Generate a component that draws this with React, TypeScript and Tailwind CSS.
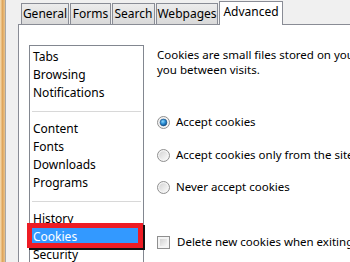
import React from 'react';

const font = { fontFamily: '"Noto Sans", "Liberation Sans", sans-serif' };

const tabs = [
  { label: 'General', w: 'w-[48px]' },
  { label: 'Forms', w: 'w-[41px]' },
  { label: 'Search', w: 'w-[43px]' },
  { label: 'Webpages', w: 'w-[62px]' },
];

const groups = [
  ['Tabs', 'Browsing', 'Notifications'],
  ['Content', 'Fonts', 'Downloads', 'Programs'],
  ['History', 'Cookies', 'Security'],
];

const Radio = ({ checked = false }: { checked?: boolean }) => (
  <svg width="13" height="13" viewBox="0 0 13 13" className="shrink-0">
    <defs>
      <linearGradient id="rb" x1="0" y1="0" x2="1" y2="1">
        <stop offset="0" stopColor="#d4d4d4" />
        <stop offset="1" stopColor="#fafafa" />
      </linearGradient>
      <radialGradient id="rdot" cx="0.4" cy="0.35" r="0.7">
        <stop offset="0" stopColor="#8fd6fb" />
        <stop offset="0.5" stopColor="#2b8fd6" />
        <stop offset="1" stopColor="#0d4a82" />
      </radialGradient>
    </defs>
    <circle cx="6.5" cy="6.5" r="6" fill="#f4f4f4" stroke="#8f8f8f" />
    <circle cx="6.5" cy="6.5" r="4.3" fill="url(#rb)" />
    {checked && <circle cx="6.5" cy="6.5" r="3.4" fill="url(#rdot)" stroke="#174f86" strokeWidth="0.6" />}
  </svg>
);

const Checkbox = () => (
  <div className="w-[13px] h-[13px] shrink-0 border border-[#8f8f8f] bg-[#f4f4f4] p-[2px]">
    <div className="w-full h-full bg-gradient-to-br from-[#d2d2d2] to-[#f7f7f7]" />
  </div>
);

export default function App() {
  return (
    <div className="w-[350px] h-[262px] overflow-hidden flex bg-[#f0f0f0] text-[11.5px] text-black" style={font}>
      <div className="w-[5px] shrink-0 bg-gradient-to-r from-[#f6dfb5] via-[#dfa65c] to-[#eac48c]" />
      <div className="w-px shrink-0 bg-[#a7a7a7]" />
      <div className="flex-1 pl-[12px] pt-[1px] flex flex-col min-w-0">
        <div className="flex items-end h-[24px] pl-[3px] gap-px text-[12px]">
          {tabs.map((t) => (
            <div
              key={t.label}
              className={`${t.w} h-[21px] shrink-0 border border-b-0 border-[#898c95] bg-gradient-to-b from-[#ececec] to-[#d9d9d9] flex items-center justify-center leading-none`}
            >
              {t.label}
            </div>
          ))}
          <div className="w-[64px] h-[24px] shrink-0 -mb-px relative z-10 border border-b-0 border-[#898c95] bg-white flex items-start justify-center pt-[4px] leading-none">
            Advanced
          </div>
        </div>
        <div className="flex-1 bg-white border-l border-t border-[#898c95] flex pl-[10px] pt-[20px] min-w-0">
          <div className="relative w-[115px] shrink-0 self-start border border-[#828790] pt-[2px] pl-[1px] pr-px h-[240px] text-[12px]">
            {groups.map((g, gi) => (
              <div key={gi}>
                {gi > 0 && (
                  <div className="h-[18px] flex items-center px-px">
                    <div className="h-px w-full bg-[#d8d8d8]" />
                  </div>
                )}
                {g.map((item) => (
                  <div
                    key={item}
                    className={`h-[18px] flex items-center pl-[2px] leading-none ${
                      item === 'Cookies' ? 'bg-[#3399ff] text-white' : ''
                    }`}
                  >
                    {item}
                  </div>
                ))}
              </div>
            ))}
            <div className="absolute left-[-3px] top-[177px] w-[116px] h-[25px] border-[5px] border-[#ee1c24] shadow-[2px_2px_0_#111]" />
          </div>
          <div className="pl-[13px] pt-[2px] flex flex-col whitespace-nowrap">
            <div className="leading-[15px]">
              Cookies are small files stored on your computer that help websites remember
              <br />
              you between visits.
            </div>
            <div className="flex items-center gap-[6px] h-[18px] mt-[36px]">
              <Radio checked />
              <span>Accept cookies</span>
            </div>
            <div className="flex items-center gap-[6px] h-[18px] mt-[15px]">
              <Radio />
              <span>Accept cookies only from the sites I visit</span>
            </div>
            <div className="flex items-center gap-[6px] h-[18px] mt-[14px]">
              <Radio />
              <span>Never accept cookies</span>
            </div>
            <div className="flex items-center gap-[7px] h-[18px] mt-[37px]">
              <Checkbox />
              <span>Delete new cookies when exiting Opera</span>
            </div>
          </div>
        </div>
      </div>
    </div>
  );
}
